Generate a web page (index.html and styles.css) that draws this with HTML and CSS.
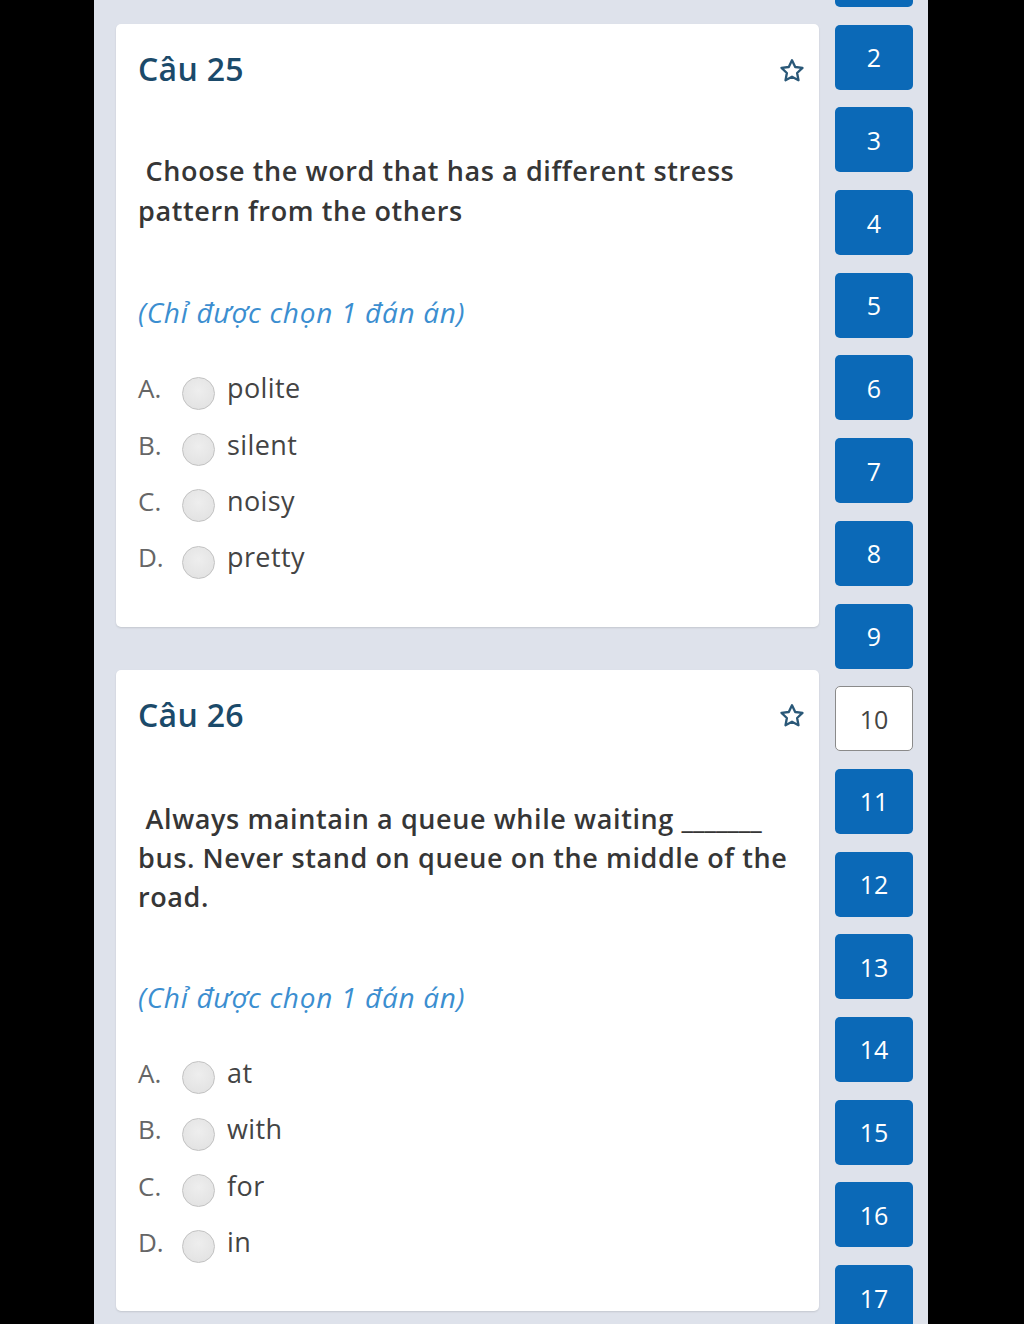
FILE: index.html
```html
<!DOCTYPE html>
<html lang="vi">
<head>
<meta charset="utf-8">
<title>Quiz</title>
<link rel="stylesheet" href="styles.css">
</head>
<body>
<div class="screen">
  <main class="questions">
    <section class="card">
      <div class="card-head">
        <h2 class="q-title">Câu 25</h2>
        <svg class="star" viewBox="0 0 24 24" width="28" height="28"><path d="M12 2.8l2.75 5.75 6.25.8-4.6 4.35 1.15 6.2L12 16.9l-5.55 3 1.15-6.2L3 9.35l6.25-.8z" fill="none" stroke="#2a5878" stroke-width="2" stroke-linejoin="round"/></svg>
      </div>
      <p class="q-text">&nbsp;Choose the word that has a different stress pattern from the others</p>
      <p class="q-note">(Chỉ được chọn 1 đán án)</p>
      <ul class="options">
        <li class="opt"><span class="letter">A.</span><span class="radio"></span><span class="label">polite</span></li>
        <li class="opt"><span class="letter">B.</span><span class="radio"></span><span class="label">silent</span></li>
        <li class="opt"><span class="letter">C.</span><span class="radio"></span><span class="label">noisy</span></li>
        <li class="opt"><span class="letter">D.</span><span class="radio"></span><span class="label">pretty</span></li>
      </ul>
    </section>
    <section class="card">
      <div class="card-head">
        <h2 class="q-title">Câu 26</h2>
        <svg class="star" viewBox="0 0 24 24" width="28" height="28"><path d="M12 2.8l2.75 5.75 6.25.8-4.6 4.35 1.15 6.2L12 16.9l-5.55 3 1.15-6.2L3 9.35l6.25-.8z" fill="none" stroke="#2a5878" stroke-width="2" stroke-linejoin="round"/></svg>
      </div>
      <p class="q-text q-text-2">&nbsp;Always maintain a queue while waiting <span class="blank">_______</span> bus. Never stand on queue on the middle of the road.</p>
      <p class="q-note">(Chỉ được chọn 1 đán án)</p>
      <ul class="options">
        <li class="opt"><span class="letter">A.</span><span class="radio"></span><span class="label">at</span></li>
        <li class="opt"><span class="letter">B.</span><span class="radio"></span><span class="label">with</span></li>
        <li class="opt"><span class="letter">C.</span><span class="radio"></span><span class="label">for</span></li>
        <li class="opt"><span class="letter">D.</span><span class="radio"></span><span class="label">in</span></li>
      </ul>
    </section>
  </main>
  <nav class="numbers">
    <a class="num">1</a>
    <a class="num">2</a>
    <a class="num">3</a>
    <a class="num">4</a>
    <a class="num">5</a>
    <a class="num">6</a>
    <a class="num">7</a>
    <a class="num">8</a>
    <a class="num">9</a>
    <a class="num num-current">10</a>
    <a class="num">11</a>
    <a class="num">12</a>
    <a class="num">13</a>
    <a class="num">14</a>
    <a class="num">15</a>
    <a class="num">16</a>
    <a class="num">17</a>
  </nav>
</div>
</body>
</html>
```

FILE: styles.css
```css
html, body {
  margin: 0;
  padding: 0;
  background: #000;
  height: 1324px;
  overflow: hidden;
}
.screen {
  margin-left: 94px;
  width: 834px;
  height: 1324px;
  background: #dee2eb;
  display: flex;
  align-items: flex-start;
  overflow: hidden;
  font-family: "Open Sans", "Noto Sans", sans-serif;
}
.questions {
  width: 703px;
  margin-left: 22px;
  padding-top: 24px;
  display: flex;
  flex-direction: column;
  gap: 43px;
  flex-shrink: 0;
}
.card {
  background: #fff;
  border-radius: 5px;
  box-shadow: 0 1px 2px rgba(0,0,0,0.12);
  padding: 25px 13px 41px 22px;
}
.card-head {
  display: flex;
  align-items: center;
  justify-content: space-between;
  height: 40px;
}
.q-title {
  margin: 0;
  font-size: 32px;
  font-weight: 600;
  color: #1b4a6a;
  line-height: 40px;
  letter-spacing: 0.3px;
}
.star {
  display: block;
  margin-top: 3px;
}
.q-text {
  margin: 62px 0 0 0;
  font-size: 27px;
  font-weight: 600;
  line-height: 40px;
  letter-spacing: 0.6px;
  color: #363636;
  max-width: 666px;
}
.q-text-2 {
  margin-top: 64px;
  line-height: 39px;
}
.blank {
  letter-spacing: 0;
}
.q-note {
  margin: 61px 0 0 0;
  font-size: 28px;
  font-style: italic;
  line-height: 40px;
  letter-spacing: 0.7px;
  color: #3b8ed0;
}
.options {
  list-style: none;
  margin: 28px 0 0 0;
  padding: 0;
}
.opt {
  display: flex;
  align-items: center;
  height: 56.4px;
}
.letter {
  width: 44px;
  font-size: 26px;
  color: #666;
  line-height: 40px;
}
.radio {
  width: 31px;
  height: 31px;
  border-radius: 50%;
  border: 1px solid #c2c2c2;
  background: radial-gradient(circle at 50% 40%, #eeeeee 0%, #e4e4e4 70%, #dadada 100%);
  margin-top: 10px;
  margin-right: 12px;
  flex-shrink: 0;
}
.label {
  font-size: 27px;
  letter-spacing: 0.4px;
  color: #444;
  line-height: 40px;
}
.numbers {
  margin-left: 16px;
  margin-top: -58px;
  width: 78px;
  display: flex;
  flex-direction: column;
  gap: 17.7px;
  flex-shrink: 0;
}
.num {
  display: flex;
  align-items: center;
  justify-content: center;
  height: 65px;
  box-sizing: border-box;
  border-radius: 5px;
  background: #0b69b7;
  color: #fff;
  font-size: 25px;
  text-decoration: none;
}
.num-current {
  background: #fff;
  border: 1px solid #8a8a8a;
  color: #444;
}
```
